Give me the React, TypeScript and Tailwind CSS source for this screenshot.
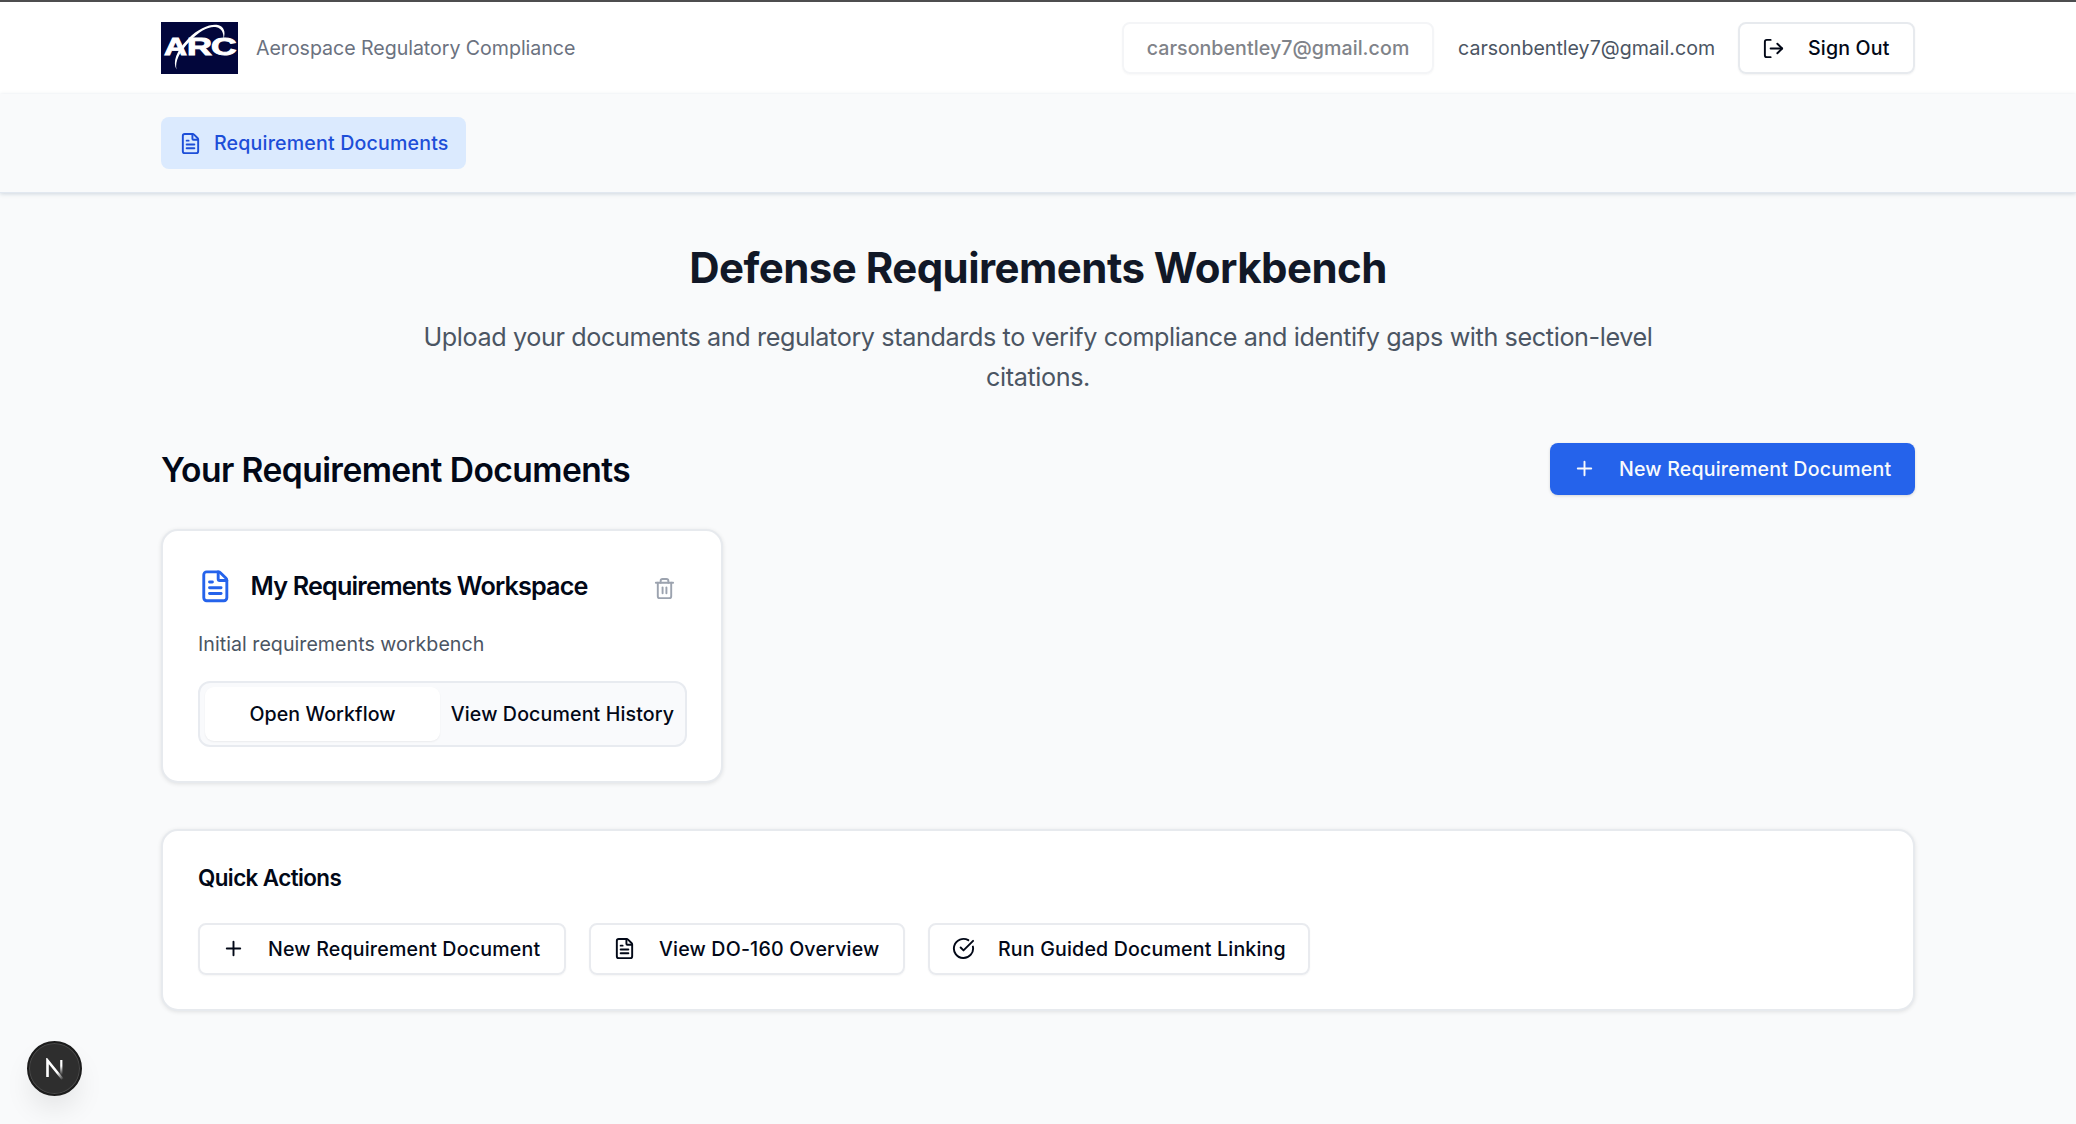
import type { ReactNode } from 'react';
import { CircleCheckBig, FileText, LogOut, Plus, Trash2 } from 'lucide-react';

const userEmail = 'carsonbentley7@gmail.com';

const quickActions = [
  { label: 'New Requirement Document', icon: Plus, width: 'w-[368px]' },
  { label: 'View DO-160 Overview', icon: FileText, width: 'w-[316px]' },
  { label: 'Run Guided Document Linking', icon: CircleCheckBig, width: 'w-[382px]' },
];

function Logo() {
  return (
    <svg className="w-[77px] h-[52px]" viewBox="0 0 77 52" role="img" aria-label="ARC">
      <rect width="77" height="52" fill="#02063b" />
      <g fill="#fff" stroke="#fff" strokeWidth="0.9" fontFamily="'Liberation Sans', sans-serif" fontWeight="700" fontSize="23">
        <text x="3" y="33" textLength="23" lengthAdjust="spacingAndGlyphs">A</text>
        <text x="26" y="33" textLength="25" lengthAdjust="spacingAndGlyphs">R</text>
        <text x="50" y="33" textLength="25.5" lengthAdjust="spacingAndGlyphs">C</text>
      </g>
      <path
        d="M15.5 47.5C11.5 40 15 29 27 17C38 5.5 50 1.5 57 3C63 4.4 65 10 62.5 17C62.8 10.5 60.5 6.5 55.5 5.3C48.5 3.8 39 8.5 29 19C18.5 30 13.8 39 15.5 47.5Z"
        fill="#fff"
      />
    </svg>
  );
}

function Card({ className, children }: { className: string; children: ReactNode }) {
  return (
    <div className={`rounded-[17px] border-2 border-[#e7eaee] bg-white shadow-[0_1px_4px_rgba(0,0,0,0.1)] ${className}`}>
      {children}
    </div>
  );
}

export default function App() {
  return (
    <div className="h-[1124px] overflow-hidden bg-[#f9fafb] font-['Inter',sans-serif] text-[19.6px] text-[#020817]">
      <header className="h-[94px] border-t-2 border-[#4d4d4f] bg-white">
        <div className="mx-auto w-[1754px] h-full flex items-center justify-between">
          <div className="flex items-center gap-[18px]">
            <Logo />
            <span className="pt-0.5 text-[#6b7280] tracking-[-0.002em] whitespace-nowrap">Aerospace Regulatory Compliance</span>
          </div>
          <div className="flex items-center">
            <button className="w-[312px] h-[52px] pt-0.5 rounded-lg border-2 border-[#f4f5f7] font-medium tracking-[0.003em] text-[#808389] shadow-[0_1px_2px_rgba(0,0,0,0.03)]">
              {userEmail}
            </button>
            <span className="ml-[24px] w-[257px] pt-0.5 text-[#4b5563] whitespace-nowrap">{userEmail}</span>
            <button className="ml-[23px] w-[177px] h-[52px] pl-[22px] flex items-center rounded-lg border-2 border-[#e7eaee] font-medium tracking-[0.008em] shadow-[0_1px_2px_rgba(0,0,0,0.05)]">
              <LogOut size={23} className="mr-[23px]" />
              <span className="pt-0.5">Sign Out</span>
            </button>
          </div>
        </div>
      </header>

      <nav className="h-[99px] border-b border-[#e2e8f0] shadow-[0_1px_4px_rgba(100,130,150,0.28)]">
        <div className="mx-auto w-[1754px] h-full flex items-center">
          <a className="h-[52px] w-[305px] pl-[18px] flex items-center rounded-lg bg-[#dbeafe] font-medium tracking-[0.009em] text-[#1d4ed8] whitespace-nowrap">
            <FileText size={23} className="mr-[12px]" />
            <span className="pt-0.5">Requirement Documents</span>
          </a>
        </div>
      </nav>

      <main className="mx-auto w-[1754px] pt-[49px]">
        <div className="text-center">
          <h1 className="text-[42px] leading-[52px] font-bold tracking-[-0.013em] text-[#111827]">
            Defense Requirements Workbench
          </h1>
          <p className="mx-auto mt-[23px] w-[1290px] text-[25.2px] leading-[40.4px] tracking-[-0.0155em] text-[#4b5563]">
            Upload your documents and regulatory standards to verify compliance and identify gaps with section-level
            citations.
          </p>
        </div>

        <div className="mt-[45px] h-[52px] flex items-center justify-between">
          <h2 className="pt-0.5 text-[33.6px] font-semibold tracking-[-0.017em]">Your Requirement Documents</h2>
          <button className="w-[365px] h-[52px] pl-[23px] flex items-center rounded-lg bg-[#2563eb] font-medium tracking-[0.009em] text-[#f8fafc] shadow-[0_1px_3px_rgba(0,0,0,0.15)]">
            <Plus size={23} className="mr-[23px]" />
            <span className="pt-0.5">New Requirement Document</span>
          </button>
        </div>

        <Card className="mt-[34px] w-[562px] h-[254px] pl-[35px] pr-[34px] pt-[34px]">
          <div className="flex items-center h-[42px]">
            <FileText size={34.6} className="text-[#2563eb]" />
            <h3 className="ml-[18px] pt-0.5 text-[25.2px] font-semibold tracking-[-0.033em] whitespace-nowrap">
              My Requirements Workspace
            </h3>
            <Trash2 size={23} className="ml-auto mr-[11px] mt-[5px] text-[#9ca3af]" />
          </div>
          <p className="mt-[23px] leading-[29px] tracking-[0.002em] text-[#4b5563]">Initial requirements workbench</p>
          <div className="mt-[22px] w-[489px] h-[66px] p-[5px] flex items-center rounded-xl border-2 border-[#e8ebf0] bg-[#f9fafc]">
            <button className="w-[235px] h-[54px] pt-0.5 rounded-[9px] bg-white font-medium tracking-[0.004em] shadow-[0_1px_2px_rgba(0,0,0,0.06)]">
              Open Workflow
            </button>
            <button className="flex-1 pl-[5px] pt-0.5 font-medium tracking-[0.007em] whitespace-nowrap">View Document History</button>
          </div>
        </Card>

        <Card className="mt-[46px] h-[182px] pl-[35px] pr-[34px] pt-[35px]">
          <h3 className="text-[22.4px] leading-[24px] font-semibold tracking-[-0.026em]">Quick Actions</h3>
          <div className="mt-[33px] flex gap-[23px]">
            {quickActions.map(({ label, icon: Icon, width }) => (
              <button
                key={label}
                className={`${width} h-[52px] pl-[22px] flex items-center rounded-lg border-2 border-[#e9ebef] font-medium tracking-[0.009em] whitespace-nowrap shadow-[0_1px_2px_rgba(0,0,0,0.04)]`}
              >
                <Icon size={23} className="mr-[23px]" />
                <span className="pt-0.5">{label}</span>
              </button>
            ))}
          </div>
        </Card>
      </main>

      {/* dev tools badge */}
      <div className="fixed left-[27px] top-[1041px] size-[55px] flex items-center justify-center rounded-full border-2 border-[#1c1c1c] bg-[#2e2e2e] shadow-[inset_0_0_0_1px_#4a4a4a,0_16px_32px_-8px_rgba(0,0,0,0.14)]">
        <svg width="20" height="22" viewBox="0 0 20 22" fill="none">
          <defs>
            <linearGradient id="stem" x1="0" y1="0" x2="0" y2="1">
              <stop offset="0.4" stopColor="#fff" />
              <stop offset="1" stopColor="#fff" stopOpacity="0" />
            </linearGradient>
            <linearGradient id="diag" x1="0" y1="0" x2="1" y2="1">
              <stop offset="0.65" stopColor="#fff" />
              <stop offset="1" stopColor="#fff" stopOpacity="0.1" />
            </linearGradient>
          </defs>
          <path d="M2.5 19V2.500L17.5 21" stroke="url(#diag)" strokeWidth="2.6" />
          <rect x="15.2" y="2" width="2.2" height="15" fill="url(#stem)" />
        </svg>
      </div>
    </div>
  );
}
